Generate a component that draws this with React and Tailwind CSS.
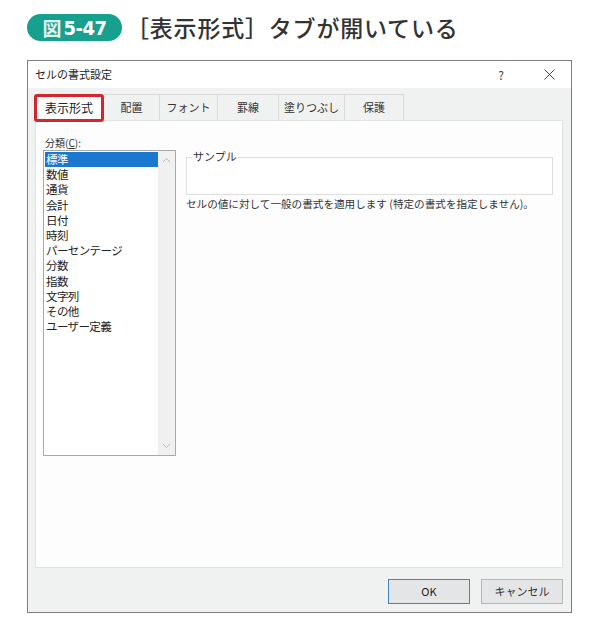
import React from 'react';

const ui = { fontFamily: '"Noto Sans CJK JP", "Noto Sans", sans-serif' };

const categories = ['標準', '数値', '通貨', '会計', '日付', '時刻', 'パーセンテージ', '分数', '指数', '文字列', 'その他', 'ユーザー定義'];

const tabs = [
    { label: '配置', w: 'w-[56px]' },
    { label: 'フォント', w: 'w-[58px]' },
    { label: '罫線', w: 'w-[61px]' },
    { label: '塗りつぶし', w: 'w-[66px]' },
    { label: '保護', w: 'w-[59px]' },
];

const Chevron = ({ up }) => (
    <svg width="9" height="6" viewBox="0 0 9 6" className="text-[#b9b9b9]">
        <path d={up ? 'M1 5 L4.5 1.5 L8 5' : 'M1 1 L4.5 4.5 L8 1'} fill="none" stroke="currentColor" strokeWidth="1" />
    </svg>
);

const App = () => {
    return (
        <div className="w-[600px] h-[631px] bg-white overflow-hidden" style={ui}>
            {/* heading */}
            <div className="flex items-center pt-[14px] pl-[27px] h-[41px]">
                <div className="h-[27px] w-[95px] rounded-full bg-[#16a08e] flex items-center justify-center text-white font-bold text-[20px] leading-none">
                    <span className="text-[19px] mr-[2px] text-[#dff3ef]">図</span>
                    <span className="tracking-[-0.5px]" style={{ fontFamily: '"DejaVu Sans Condensed", "Roboto", sans-serif' }}>5-47</span>
                </div>
                <div className="ml-[4px] text-[23px] font-medium text-[#333] leading-none tracking-[0.8px]">［表示形式］タブが開いている</div>
            </div>

            {/* dialog */}
            <div className="ml-[27px] mt-[19px] w-[545px] h-[553px] border border-[#7d7d7d] flex flex-col text-[#222]">
                <div className="h-[27px] bg-white flex items-center pl-[7px] pr-[16px] text-[11px]">
                    <span className="flex-1">セルの書式設定</span>
                    <span className="text-[12px] text-[#444] mr-[40px]">?</span>
                    <svg width="11" height="11" viewBox="0 0 11 11" className="text-[#444]">
                        <path d="M0.5 0.5 L10.5 10.5 M10.5 0.5 L0.5 10.5" stroke="currentColor" strokeWidth="1" />
                    </svg>
                </div>

                <div className="flex-1 bg-[#f0f1f1] flex flex-col pt-[6px]">
                    <div className="flex h-[26px] pl-[6px] text-[11px] text-[#333]">
                        <div className="relative z-10 w-[70px] h-[28px] border-[3px] border-[#d7252d] rounded-[3px] bg-white flex items-center justify-center text-[12px] text-[#222]">表示形式</div>
                        {tabs.map((t) => (
                            <div key={t.label} className={`${t.w} h-[26px] border-t border-r border-[#dadada] bg-[#f0f1f1] flex items-center justify-center`}>{t.label}</div>
                        ))}
                    </div>

                    <div className="ml-[7px] w-[528px] h-[448px] bg-[#fdfdfd] border border-[#e2e2e2] flex pt-[14px] pl-[7px]">
                        <div className="w-[133px] flex flex-col">
                            <div className="h-[15px] pl-[2px] text-[10px] leading-[15px] text-[#333]">分類(<u>C</u>):</div>
                            <div className="h-[306px] border border-[#a9a9a9] bg-white flex">
                                <div className="flex-1 pt-[1px] pl-[1px] text-[11.5px] leading-[15.2px] text-[#222]">
                                    {categories.map((c, i) => (
                                        <div key={c} className={i === 0 ? 'bg-[#1b78d0] text-white pl-[1px] tracking-[-0.6px]' : 'pl-[1px] tracking-[-0.6px]'}>{c}</div>
                                    ))}
                                </div>
                                <div className="w-[17px] bg-[#f0f0f0] flex flex-col items-center justify-between pt-[6px] pb-[6px]">
                                    <Chevron up />
                                    <Chevron />
                                </div>
                            </div>
                        </div>

                        <div className="ml-[10px] w-[367px] pt-[22px]">
                            <div className="relative h-[38px] border border-[#dedede] bg-white">
                                <span className="absolute left-[5px] -top-[9px] bg-white px-[1px] text-[11px] leading-[14px] text-[#333]">サンプル</span>
                            </div>
                            <div className="mt-[2px] text-[10.6px] leading-[14px] text-[#333] tracking-[0px]">セルの値に対して一般の書式を適用します (特定の書式を指定しません)。</div>
                        </div>
                    </div>

                    <div className="flex justify-end gap-[11px] mt-[11px] pr-[8px] text-[11px]">
                        <button className="w-[82px] h-[25px] border border-[#3f86bf] bg-[#e3e5e6] text-[#222]">OK</button>
                        <button className="w-[82px] h-[25px] border border-[#b7b7b7] bg-[#e3e5e6] text-[#333]">キャンセル</button>
                    </div>
                </div>
            </div>
        </div>
    );
};

export default App;
